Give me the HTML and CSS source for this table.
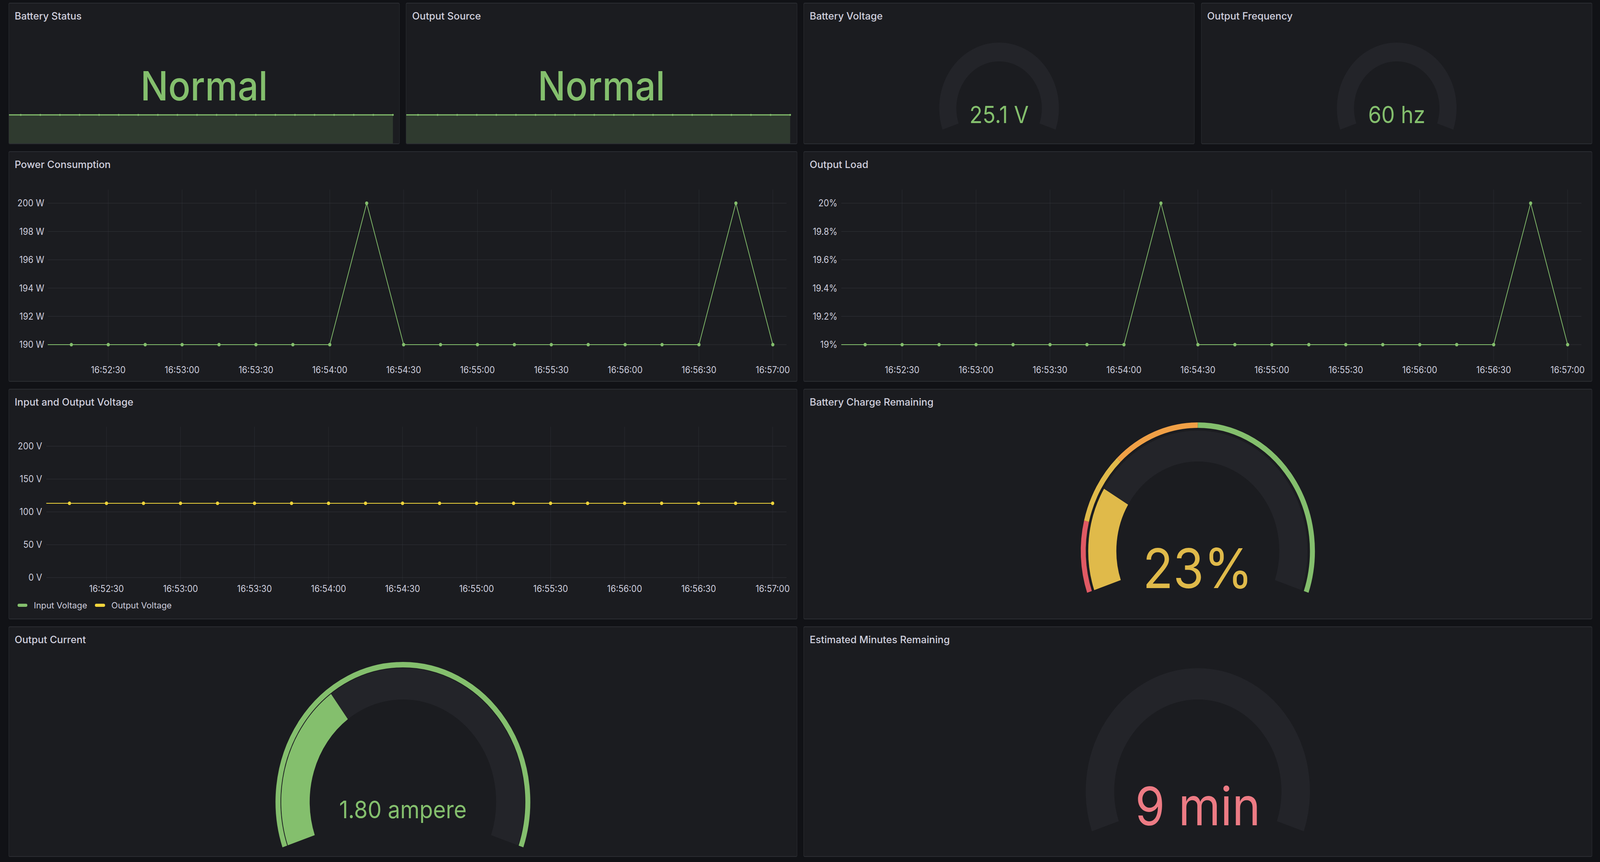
FILE: index.html
```html
<!DOCTYPE html>
<html lang="en">
<head>
<meta charset="utf-8">
<title>UPS Dashboard</title>
<link rel="stylesheet" href="styles.css">
</head>
<body>
<main class="dashboard">

  <div class="row row-top">
    <section class="panel">
      <header class="panel-header"><h2 class="panel-title">Battery Status</h2></header>
      <div class="panel-body">
        <svg class="viz" viewBox="0 0 1096 294" preserveAspectRatio="none">
          <rect class="spark-fill" x="0" y="221" width="1078" height="73"/>
          <line class="spark-line" x1="0" y1="221" x2="1078" y2="221"/>
          <g class="spark-dots">
            <circle cx="33" cy="221" r="2.5"/><circle cx="88" cy="221" r="2.5"/><circle cx="143" cy="221" r="2.5"/><circle cx="198" cy="221" r="2.5"/><circle cx="253" cy="221" r="2.5"/><circle cx="308" cy="221" r="2.5"/><circle cx="363" cy="221" r="2.5"/><circle cx="418" cy="221" r="2.5"/><circle cx="473" cy="221" r="2.5"/><circle cx="528" cy="221" r="2.5"/><circle cx="583" cy="221" r="2.5"/><circle cx="638" cy="221" r="2.5"/><circle cx="693" cy="221" r="2.5"/><circle cx="748" cy="221" r="2.5"/><circle cx="803" cy="221" r="2.5"/><circle cx="858" cy="221" r="2.5"/><circle cx="913" cy="221" r="2.5"/><circle cx="968" cy="221" r="2.5"/><circle cx="1023" cy="221" r="2.5"/><circle cx="1078" cy="221" r="2.5"/>
          </g>
          <text class="stat-value" x="548" y="184">Normal</text>
        </svg>
      </div>
    </section>

    <section class="panel">
      <header class="panel-header"><h2 class="panel-title">Output Source</h2></header>
      <div class="panel-body">
        <svg class="viz" viewBox="0 0 1096 294" preserveAspectRatio="none">
          <rect class="spark-fill" x="0" y="221" width="1078" height="73"/>
          <line class="spark-line" x1="0" y1="221" x2="1078" y2="221"/>
          <g class="spark-dots">
            <circle cx="33" cy="221" r="2.5"/><circle cx="88" cy="221" r="2.5"/><circle cx="143" cy="221" r="2.5"/><circle cx="198" cy="221" r="2.5"/><circle cx="253" cy="221" r="2.5"/><circle cx="308" cy="221" r="2.5"/><circle cx="363" cy="221" r="2.5"/><circle cx="418" cy="221" r="2.5"/><circle cx="473" cy="221" r="2.5"/><circle cx="528" cy="221" r="2.5"/><circle cx="583" cy="221" r="2.5"/><circle cx="638" cy="221" r="2.5"/><circle cx="693" cy="221" r="2.5"/><circle cx="748" cy="221" r="2.5"/><circle cx="803" cy="221" r="2.5"/><circle cx="858" cy="221" r="2.5"/><circle cx="913" cy="221" r="2.5"/><circle cx="968" cy="221" r="2.5"/><circle cx="1023" cy="221" r="2.5"/><circle cx="1078" cy="221" r="2.5"/>
          </g>
          <text class="stat-value" x="548" y="184">Normal</text>
        </svg>
      </div>
    </section>

    <section class="panel">
      <header class="panel-header"><h2 class="panel-title">Battery Voltage</h2></header>
      <div class="panel-body">
        <svg class="viz" viewBox="0 0 1096 294" preserveAspectRatio="none">
          <path class="gauge-track" stroke-width="48" d="M411.85 250.88 A144 144 0 1 1 684.15 250.88"/>
          <text class="gauge-value gauge-small green-text" x="548" y="242">25.1 V</text>
        </svg>
      </div>
    </section>

    <section class="panel">
      <header class="panel-header"><h2 class="panel-title">Output Frequency</h2></header>
      <div class="panel-body">
        <svg class="viz" viewBox="0 0 1096 294" preserveAspectRatio="none">
          <path class="gauge-track" stroke-width="48" d="M411.85 250.88 A144 144 0 1 1 684.15 250.88"/>
          <text class="gauge-value gauge-small green-text" x="548" y="242">60 hz</text>
        </svg>
      </div>
    </section>
  </div>

  <div class="row row-wide">
    <section class="panel">
      <header class="panel-header"><h2 class="panel-title">Power Consumption</h2></header>
      <div class="panel-body">
        <svg class="viz" viewBox="0 0 2214 522" preserveAspectRatio="none">
          <g class="grid-v">
            <line x1="279" y1="32" x2="279" y2="473"/><line x1="486.5" y1="32" x2="486.5" y2="473"/><line x1="694" y1="32" x2="694" y2="473"/><line x1="901.5" y1="32" x2="901.5" y2="473"/><line x1="1109" y1="32" x2="1109" y2="473"/><line x1="1316.5" y1="32" x2="1316.5" y2="473"/><line x1="1524" y1="32" x2="1524" y2="473"/><line x1="1731.5" y1="32" x2="1731.5" y2="473"/><line x1="1939" y1="32" x2="1939" y2="473"/><line x1="2146.5" y1="32" x2="2146.5" y2="473"/>
          </g>
          <g class="grid-h">
            <line x1="109" y1="67" x2="2185" y2="67"/><line x1="109" y1="139.4" x2="2185" y2="139.4"/><line x1="109" y1="211.8" x2="2185" y2="211.8"/><line x1="109" y1="284.2" x2="2185" y2="284.2"/><line x1="109" y1="356.6" x2="2185" y2="356.6"/><line x1="109" y1="429" x2="2185" y2="429"/>
          </g>
          <g class="axis-y">
            <text x="99" y="75.5">200 W</text><text x="99" y="147.9">198 W</text><text x="99" y="220.3">196 W</text><text x="99" y="292.7">194 W</text><text x="99" y="365.1">192 W</text><text x="99" y="437.5">190 W</text>
          </g>
          <g class="axis-x">
            <text x="279" y="502.5">16:52:30</text><text x="486.5" y="502.5">16:53:00</text><text x="694" y="502.5">16:53:30</text><text x="901.5" y="502.5">16:54:00</text><text x="1109" y="502.5">16:54:30</text><text x="1316.5" y="502.5">16:55:00</text><text x="1524" y="502.5">16:55:30</text><text x="1731.5" y="502.5">16:56:00</text><text x="1939" y="502.5">16:56:30</text><text x="2146.5" y="502.5">16:57:00</text>
          </g>
          <polyline class="series series-green" points="109,429 901.5,429 1005.25,67 1109,429 1939,429 2042.75,67 2146.5,429"/>
          <g class="dots dots-green">
            <circle cx="175.25" cy="429" r="4.5"/><circle cx="279" cy="429" r="4.5"/><circle cx="382.75" cy="429" r="4.5"/><circle cx="486.5" cy="429" r="4.5"/><circle cx="590.25" cy="429" r="4.5"/><circle cx="694" cy="429" r="4.5"/><circle cx="797.75" cy="429" r="4.5"/><circle cx="901.5" cy="429" r="4.5"/><circle cx="1005.25" cy="67" r="4.5"/><circle cx="1109" cy="429" r="4.5"/><circle cx="1212.75" cy="429" r="4.5"/><circle cx="1316.5" cy="429" r="4.5"/><circle cx="1420.25" cy="429" r="4.5"/><circle cx="1524" cy="429" r="4.5"/><circle cx="1627.75" cy="429" r="4.5"/><circle cx="1731.5" cy="429" r="4.5"/><circle cx="1835.25" cy="429" r="4.5"/><circle cx="1939" cy="429" r="4.5"/><circle cx="2042.75" cy="67" r="4.5"/><circle cx="2146.5" cy="429" r="4.5"/>
          </g>
        </svg>
      </div>
    </section>

    <section class="panel">
      <header class="panel-header"><h2 class="panel-title">Output Load</h2></header>
      <div class="panel-body">
        <svg class="viz" viewBox="0 0 2214 522" preserveAspectRatio="none">
          <g class="grid-v">
            <line x1="276" y1="32" x2="276" y2="473"/><line x1="483.8" y1="32" x2="483.8" y2="473"/><line x1="691.6" y1="32" x2="691.6" y2="473"/><line x1="899.4" y1="32" x2="899.4" y2="473"/><line x1="1107.2" y1="32" x2="1107.2" y2="473"/><line x1="1315" y1="32" x2="1315" y2="473"/><line x1="1522.8" y1="32" x2="1522.8" y2="473"/><line x1="1730.6" y1="32" x2="1730.6" y2="473"/><line x1="1938.4" y1="32" x2="1938.4" y2="473"/><line x1="2146.2" y1="32" x2="2146.2" y2="473"/>
          </g>
          <g class="grid-h">
            <line x1="105" y1="67" x2="2185" y2="67"/><line x1="105" y1="139.4" x2="2185" y2="139.4"/><line x1="105" y1="211.8" x2="2185" y2="211.8"/><line x1="105" y1="284.2" x2="2185" y2="284.2"/><line x1="105" y1="356.6" x2="2185" y2="356.6"/><line x1="105" y1="429" x2="2185" y2="429"/>
          </g>
          <g class="axis-y">
            <text x="94" y="75.5">20%</text><text x="94" y="147.9">19.8%</text><text x="94" y="220.3">19.6%</text><text x="94" y="292.7">19.4%</text><text x="94" y="365.1">19.2%</text><text x="94" y="437.5">19%</text>
          </g>
          <g class="axis-x">
            <text x="276" y="502.5">16:52:30</text><text x="483.8" y="502.5">16:53:00</text><text x="691.6" y="502.5">16:53:30</text><text x="899.4" y="502.5">16:54:00</text><text x="1107.2" y="502.5">16:54:30</text><text x="1315" y="502.5">16:55:00</text><text x="1522.8" y="502.5">16:55:30</text><text x="1730.6" y="502.5">16:56:00</text><text x="1938.4" y="502.5">16:56:30</text><text x="2146.2" y="502.5">16:57:00</text>
          </g>
          <polyline class="series series-green" points="105,429 899.4,429 1003.3,67 1107.2,429 1938.4,429 2042.3,67 2146.2,429"/>
          <g class="dots dots-green">
            <circle cx="172.1" cy="429" r="4.5"/><circle cx="276" cy="429" r="4.5"/><circle cx="379.9" cy="429" r="4.5"/><circle cx="483.8" cy="429" r="4.5"/><circle cx="587.7" cy="429" r="4.5"/><circle cx="691.6" cy="429" r="4.5"/><circle cx="795.5" cy="429" r="4.5"/><circle cx="899.4" cy="429" r="4.5"/><circle cx="1003.3" cy="67" r="4.5"/><circle cx="1107.2" cy="429" r="4.5"/><circle cx="1211.1" cy="429" r="4.5"/><circle cx="1315" cy="429" r="4.5"/><circle cx="1418.9" cy="429" r="4.5"/><circle cx="1522.8" cy="429" r="4.5"/><circle cx="1626.7" cy="429" r="4.5"/><circle cx="1730.6" cy="429" r="4.5"/><circle cx="1834.5" cy="429" r="4.5"/><circle cx="1938.4" cy="429" r="4.5"/><circle cx="2042.3" cy="67" r="4.5"/><circle cx="2146.2" cy="429" r="4.5"/>
          </g>
        </svg>
      </div>
    </section>
  </div>

  <div class="row row-wide">
    <section class="panel">
      <header class="panel-header"><h2 class="panel-title">Input and Output Voltage</h2></header>
      <div class="panel-body">
        <svg class="viz viz-legend" viewBox="0 0 2214 460" preserveAspectRatio="none">
          <g class="grid-v">
            <line x1="274" y1="31" x2="274" y2="425"/><line x1="482" y1="31" x2="482" y2="425"/><line x1="690" y1="31" x2="690" y2="425"/><line x1="898" y1="31" x2="898" y2="425"/><line x1="1106" y1="31" x2="1106" y2="425"/><line x1="1314" y1="31" x2="1314" y2="425"/><line x1="1522" y1="31" x2="1522" y2="425"/><line x1="1730" y1="31" x2="1730" y2="425"/><line x1="1938" y1="31" x2="1938" y2="425"/><line x1="2146" y1="31" x2="2146" y2="425"/>
          </g>
          <g class="grid-h">
            <line x1="105" y1="81" x2="2185" y2="81"/><line x1="105" y1="165" x2="2185" y2="165"/><line x1="105" y1="249" x2="2185" y2="249"/><line x1="105" y1="333" x2="2185" y2="333"/><line x1="105" y1="417" x2="2185" y2="417"/>
          </g>
          <g class="axis-y">
            <text x="93" y="89.5">200 V</text><text x="93" y="173.5">150 V</text><text x="93" y="257.5">100 V</text><text x="93" y="341.5">50 V</text><text x="93" y="425.5">0 V</text>
          </g>
          <g class="axis-x">
            <text x="274" y="453.5">16:52:30</text><text x="482" y="453.5">16:53:00</text><text x="690" y="453.5">16:53:30</text><text x="898" y="453.5">16:54:00</text><text x="1106" y="453.5">16:54:30</text><text x="1314" y="453.5">16:55:00</text><text x="1522" y="453.5">16:55:30</text><text x="1730" y="453.5">16:56:00</text><text x="1938" y="453.5">16:56:30</text><text x="2146" y="453.5">16:57:00</text>
          </g>
          <polyline class="series series-green" points="105,227 2146,227"/>
          <polyline class="series series-yellow" points="105,227 2146,227"/>
          <g class="dots dots-yellow">
            <circle cx="170" cy="227" r="4.5"/><circle cx="274" cy="227" r="4.5"/><circle cx="378" cy="227" r="4.5"/><circle cx="482" cy="227" r="4.5"/><circle cx="586" cy="227" r="4.5"/><circle cx="690" cy="227" r="4.5"/><circle cx="794" cy="227" r="4.5"/><circle cx="898" cy="227" r="4.5"/><circle cx="1002" cy="227" r="4.5"/><circle cx="1106" cy="227" r="4.5"/><circle cx="1210" cy="227" r="4.5"/><circle cx="1314" cy="227" r="4.5"/><circle cx="1418" cy="227" r="4.5"/><circle cx="1522" cy="227" r="4.5"/><circle cx="1626" cy="227" r="4.5"/><circle cx="1730" cy="227" r="4.5"/><circle cx="1834" cy="227" r="4.5"/><circle cx="1938" cy="227" r="4.5"/><circle cx="2042" cy="227" r="4.5"/><circle cx="2146" cy="227" r="4.5"/>
          </g>
        </svg>
        <div class="legend">
          <span class="legend-item"><i class="swatch swatch-green"></i>Input Voltage</span>
          <span class="legend-item"><i class="swatch swatch-yellow"></i>Output Voltage</span>
        </div>
      </div>
    </section>

    <section class="panel">
      <header class="panel-header"><h2 class="panel-title">Battery Charge Remaining</h2></header>
      <div class="panel-body">
        <svg class="viz" viewBox="0 0 2214 522" preserveAspectRatio="none">
          <path class="ring red-stroke" stroke-width="14" d="M802.54 453.83 A322 322 0 0 1 794.16 272.74"/>
          <path class="ring yellow-stroke" stroke-width="14" d="M794.16 272.74 A322 322 0 0 1 884.94 115.82"/>
          <path class="ring orange-stroke" stroke-width="14" d="M884.94 115.82 A322 322 0 0 1 1107 27"/>
          <path class="ring green-stroke" stroke-width="14" d="M1107 27 A322 322 0 0 1 1411.46 453.83"/>
          <path class="gauge-track" stroke-width="79" d="M853.13 436.42 A268.5 268.5 0 1 1 1360.87 436.42"/>
          <path class="ring yellow-stroke" stroke-width="79" d="M853.13 436.42 A268.5 268.5 0 0 1 877.19 210.15"/>
          <text class="gauge-value gauge-xl yellow-text" x="1107" y="444">23%</text>
        </svg>
      </div>
    </section>
  </div>

  <div class="row row-wide">
    <section class="panel">
      <header class="panel-header"><h2 class="panel-title">Output Current</h2></header>
      <div class="panel-body">
        <svg class="viz" viewBox="0 0 2214 522" preserveAspectRatio="none">
          <path class="ring green-stroke" stroke-width="14" d="M775.12 497.28 A351 351 0 1 1 1438.88 497.28"/>
          <path class="gauge-track" stroke-width="80" d="M821.45 481.32 A302 302 0 1 1 1392.55 481.32"/>
          <path class="ring green-stroke" stroke-width="80" d="M821.45 481.32 A302 302 0 0 1 928.64 139.30"/>
          <text class="gauge-value gauge-medium green-text" x="1107" y="425">1.80 ampere</text>
        </svg>
      </div>
    </section>

    <section class="panel">
      <header class="panel-header"><h2 class="panel-title">Estimated Minutes Remaining</h2></header>
      <div class="panel-body">
        <svg class="viz" viewBox="0 0 2214 522" preserveAspectRatio="none">
          <path class="gauge-track" stroke-width="80" d="M846.98 445.53 A275 275 0 1 1 1367.02 445.53"/>
          <text class="gauge-value gauge-large red-text" x="1107" y="443">9 min</text>
        </svg>
      </div>
    </section>
  </div>

</main>
</body>
</html>
```

FILE: styles.css
```css
/* Design units: the dashboard is drawn for a 4500 x 2206 frame and
   scales with the viewport. --x is one design pixel across, --y down. */
html {
  --x: calc(100vw / 4500);
  --y: calc(100vh / 2206);
}

html,
body {
  margin: 0;
  padding: 0;
  background: #111216;
}

body {
  width: 100vw;
  height: 100vh;
  overflow: hidden;
  font-family: Inter, "Noto Sans", "Liberation Sans", sans-serif;
  color: #ccccdc;
}

.dashboard {
  box-sizing: border-box;
  width: 100%;
  height: 100%;
  padding: calc(7 * var(--y)) calc(22 * var(--x)) 0 calc(24 * var(--x));
  display: flex;
  flex-direction: column;
  gap: calc(18 * var(--y));
}

.row {
  display: grid;
  column-gap: calc(18 * var(--x));
  flex: none;
}

.row-top {
  grid-template-columns: repeat(4, minmax(0, 1fr));
  height: calc(362 * var(--y));
}

.row-wide {
  grid-template-columns: repeat(2, minmax(0, 1fr));
  height: calc(590 * var(--y));
}

.panel {
  box-sizing: border-box;
  min-width: 0;
  min-height: 0;
  background: #1b1c20;
  border-style: solid;
  border-color: #2b2d32;
  border-width: calc(2 * var(--y)) calc(2 * var(--x));
  border-radius: calc(4 * var(--x));
  display: flex;
  flex-direction: column;
  overflow: hidden;
}

.panel-header {
  flex: none;
  height: calc(64 * var(--y));
  display: flex;
  align-items: center;
  padding-left: calc(16 * var(--x));
}

.panel-title {
  margin: 0;
  font-size: calc(28 * var(--x));
  line-height: 1;
  font-weight: 500;
  color: #d0d0de;
  white-space: nowrap;
}

.panel-body {
  flex: 1;
  min-height: 0;
  display: flex;
  flex-direction: column;
}

.viz {
  display: block;
  width: 100%;
  flex: 1;
  min-height: 0;
}

.viz-legend {
  flex: none;
  height: calc(460 * var(--y));
}

/* stat */
.spark-fill {
  fill: #2f3a2f;
}

.spark-line {
  stroke: #84bf6d;
  stroke-width: 3;
}

.spark-dots circle {
  fill: #84bf6d;
}

.stat-value {
  font-family: Inter, "Noto Sans", sans-serif;
  font-size: 103px;
  font-weight: 500;
  fill: #84bf6d;
  text-anchor: middle;
}

/* gauges */
.gauge-track {
  fill: none;
  stroke: #232429;
}

.ring {
  fill: none;
}

.green-stroke { stroke: #84bf6d; }
.yellow-stroke { stroke: #e0ba4a; }
.orange-stroke { stroke: #f0a046; }
.red-stroke { stroke: #e05a64; }

.gauge-value {
  font-family: Inter, "Noto Sans", sans-serif;
  font-weight: 400;
  text-anchor: middle;
}

.gauge-small { font-size: 60px; }
.gauge-medium { font-size: 62px; }
.gauge-large { font-size: 135px; }
.gauge-xl { font-size: 140px; }

.green-text { fill: #84bf6d; }
.yellow-text { fill: #e0ba4a; }
.red-text { fill: #ed7b84; }

/* time series */
.grid-h line {
  stroke: #33353b;
  stroke-width: 1;
}

.grid-v line {
  stroke: #2b2d32;
  stroke-width: 1;
}

.axis-y text,
.axis-x text {
  font-family: Inter, "Noto Sans", sans-serif;
  font-size: 24px;
  fill: #ccccdc;
}

.axis-y text {
  text-anchor: end;
}

.axis-x text {
  text-anchor: middle;
}

.series {
  fill: none;
  stroke-width: 2;
  stroke-linejoin: round;
}

.series-green { stroke: #84bf6d; }
.series-yellow { stroke: #f0d43c; }

.dots-green circle { fill: #84bf6d; }
.dots-yellow circle { fill: #f0d43c; }

/* legend */
.legend {
  flex: none;
  height: calc(56 * var(--y));
  margin-bottom: calc(6 * var(--y));
  padding-left: calc(24 * var(--x));
  display: flex;
  align-items: center;
  gap: calc(22 * var(--x));
  font-size: calc(24 * var(--x));
  color: #ccccdc;
}

.legend-item {
  display: flex;
  align-items: center;
  gap: calc(18 * var(--x));
  white-space: nowrap;
}

.swatch {
  display: block;
  width: calc(28 * var(--x));
  height: calc(8 * var(--y));
  border-radius: calc(4 * var(--x));
}

.swatch-green { background: #84bf6d; }
.swatch-yellow { background: #f0d43c; }
```
